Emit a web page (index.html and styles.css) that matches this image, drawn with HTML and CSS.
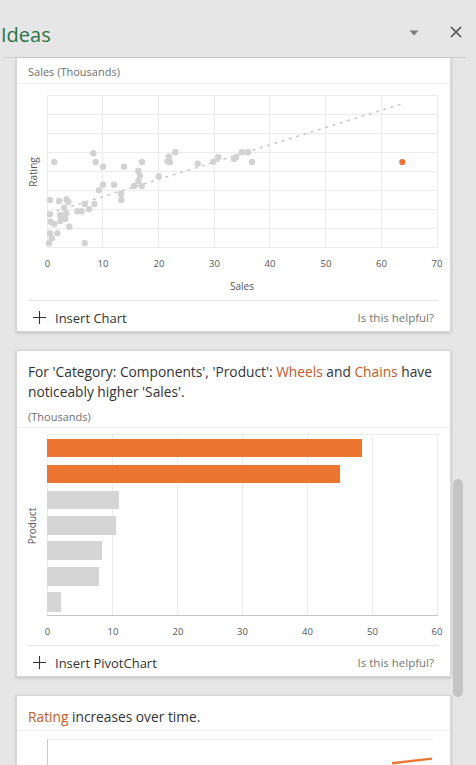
FILE: index.html
```html
<!DOCTYPE html>
<html lang="en">
<head>
<meta charset="utf-8">
<title>Ideas</title>
<link rel="stylesheet" href="styles.css">
</head>
<body>
<div class="pane">
  <header class="pane-header">
    <h1 class="title">Ideas</h1>
    <div class="header-actions">
      <svg class="icon-dropdown" width="10" height="6" viewBox="0 0 10 6"><path d="M0.5 0.5 H9.5 L5 5.5 Z" fill="#7a7a7a"/></svg>
      <svg class="icon-close" width="12" height="12" viewBox="0 0 12 12"><path d="M1 1 L11 11 M11 1 L1 11" stroke="#505050" stroke-width="1.6" fill="none"/></svg>
    </div>
  </header>

  <main class="scroll">
    <section class="card card-first">
      <div class="card-sub card-sub-top">Sales (Thousands)</div>
      <svg class="chart chart-scatter" width="433" height="216" viewBox="17 84 433 216">
        <g class="grid" stroke="#ececec" stroke-width="1" shape-rendering="crispEdges">
          <line x1="47" y1="95.5" x2="437" y2="95.5"/>
          <line x1="47" y1="114.5" x2="437" y2="114.5"/>
          <line x1="47" y1="133.5" x2="437" y2="133.5"/>
          <line x1="47" y1="152.5" x2="437" y2="152.5"/>
          <line x1="47" y1="171.5" x2="437" y2="171.5"/>
          <line x1="47" y1="190.5" x2="437" y2="190.5"/>
          <line x1="47" y1="209.5" x2="437" y2="209.5"/>
          <line x1="47" y1="228.5" x2="437" y2="228.5"/>
          <line x1="47" y1="247.5" x2="437" y2="247.5"/>
          <line x1="47.5" y1="95" x2="47.5" y2="248"/>
          <line x1="102.5" y1="95" x2="102.5" y2="248"/>
          <line x1="158.5" y1="95" x2="158.5" y2="248"/>
          <line x1="214.5" y1="95" x2="214.5" y2="248"/>
          <line x1="269.5" y1="95" x2="269.5" y2="248"/>
          <line x1="325.5" y1="95" x2="325.5" y2="248"/>
          <line x1="381.5" y1="95" x2="381.5" y2="248"/>
          <line x1="437.5" y1="95" x2="437.5" y2="248"/>
        </g>
        <line x1="50" y1="213" x2="400" y2="104.5" stroke="#c8c8c8" stroke-width="1.6" stroke-dasharray="1.6 6" stroke-linecap="round"/>
        <g class="pts" fill="#d2d2d2">
          <circle cx="54.3" cy="162" r="3.2"/>
          <circle cx="93.3" cy="153.3" r="3.2"/>
          <circle cx="95.7" cy="162" r="3.2"/>
          <circle cx="103" cy="166.7" r="3.2"/>
          <circle cx="124" cy="166.7" r="3.2"/>
          <circle cx="142" cy="162" r="3.2"/>
          <circle cx="138.3" cy="171" r="3.2"/>
          <circle cx="140" cy="176" r="3.2"/>
          <circle cx="138.3" cy="181" r="3.2"/>
          <circle cx="141.7" cy="186" r="3.2"/>
          <circle cx="134" cy="186" r="3.2"/>
          <circle cx="158.7" cy="176.3" r="3.2"/>
          <circle cx="168.7" cy="156.7" r="3.2"/>
          <circle cx="175.3" cy="152.3" r="3.2"/>
          <circle cx="170" cy="162" r="3.2"/>
          <circle cx="167.5" cy="161.5" r="3.2"/>
          <circle cx="197.7" cy="163.7" r="3.2"/>
          <circle cx="213.3" cy="161.7" r="3.2"/>
          <circle cx="218.3" cy="157.3" r="3.2"/>
          <circle cx="236" cy="157.3" r="3.2"/>
          <circle cx="234" cy="159" r="3.2"/>
          <circle cx="242" cy="152.3" r="3.2"/>
          <circle cx="248" cy="152.3" r="3.2"/>
          <circle cx="252" cy="162" r="3.2"/>
          <circle cx="103" cy="184.7" r="3.2"/>
          <circle cx="114" cy="184.7" r="3.2"/>
          <circle cx="99" cy="190.3" r="3.2"/>
          <circle cx="121" cy="194" r="3.2"/>
          <circle cx="121.3" cy="200" r="3.2"/>
          <circle cx="94.3" cy="204" r="3.2"/>
          <circle cx="84.7" cy="204" r="3.2"/>
          <circle cx="89" cy="209.3" r="3.2"/>
          <circle cx="81.7" cy="211.3" r="3.2"/>
          <circle cx="77.3" cy="211.3" r="3.2"/>
          <circle cx="50" cy="200" r="3.2"/>
          <circle cx="59" cy="201" r="3.2"/>
          <circle cx="68.3" cy="202" r="3.2"/>
          <circle cx="66.5" cy="199.5" r="3.2"/>
          <circle cx="64.3" cy="207.7" r="3.2"/>
          <circle cx="66.3" cy="213.3" r="3.2"/>
          <circle cx="60.3" cy="215.3" r="3.2"/>
          <circle cx="65.3" cy="219" r="3.2"/>
          <circle cx="60.3" cy="221" r="3.2"/>
          <circle cx="50" cy="214.3" r="3.2"/>
          <circle cx="50.5" cy="221.7" r="3.2"/>
          <circle cx="54.3" cy="224" r="3.2"/>
          <circle cx="69.3" cy="226.7" r="3.2"/>
          <circle cx="50" cy="233.3" r="3.2"/>
          <circle cx="57.3" cy="233.3" r="3.2"/>
          <circle cx="51.7" cy="238.3" r="3.2"/>
          <circle cx="49" cy="243.3" r="3.2"/>
          <circle cx="84.7" cy="243" r="3.2"/>
        </g>
        <circle cx="402.3" cy="162" r="3.1" fill="#e6733a"/>
        <g class="tick" text-anchor="middle">
          <text x="47.5" y="267">0</text>
          <text x="103" y="267">10</text>
          <text x="159" y="267">20</text>
          <text x="214.5" y="267">30</text>
          <text x="270" y="267">40</text>
          <text x="326" y="267">50</text>
          <text x="381.5" y="267">60</text>
          <text x="437" y="267">70</text>
        </g>
        <text class="axis-title" x="242" y="290" text-anchor="middle">Sales</text>
        <text class="axis-title" x="0" y="0" text-anchor="middle" transform="translate(36.5 172) rotate(-90)">Rating</text>
      </svg>
      <div class="card-footer">
        <span class="action"><svg class="icon-plus" width="13" height="13" viewBox="0 0 13 13"><path d="M6.5 0 V13 M0 6.5 H13" stroke="#333" stroke-width="1.1" fill="none"/></svg>Insert Chart</span>
        <span class="helpful">Is this helpful?</span>
      </div>
    </section>

    <section class="card">
      <div class="card-head">
        <p class="insight">For 'Category: Components', 'Product': <span class="hl">Wheels</span> and <span class="hl">Chains</span> have noticeably higher 'Sales'.</p>
        <div class="card-sub">(Thousands)</div>
      </div>
      <svg class="chart chart-bar" width="433" height="217" viewBox="17 429 433 217">
        <g stroke="#ececec" stroke-width="1" shape-rendering="crispEdges">
          <line x1="47" y1="435.5" x2="437" y2="435.5"/>
          <line x1="47.5" y1="435" x2="47.5" y2="616"/>
          <line x1="112.5" y1="435" x2="112.5" y2="616"/>
          <line x1="177.5" y1="435" x2="177.5" y2="616"/>
          <line x1="242.5" y1="435" x2="242.5" y2="616"/>
          <line x1="307.5" y1="435" x2="307.5" y2="616"/>
          <line x1="372.5" y1="435" x2="372.5" y2="616"/>
          <line x1="437.5" y1="435" x2="437.5" y2="616"/>
        </g>
        <line x1="47" y1="616.5" x2="438" y2="616.5" stroke="#c6c6c6" stroke-width="1" shape-rendering="crispEdges"/>
        <g shape-rendering="crispEdges">
          <rect x="47" y="440" width="315" height="18" fill="#ed7532"/>
          <rect x="47" y="466" width="293" height="18" fill="#ed7532"/>
          <rect x="47" y="492" width="72" height="18" fill="#d5d5d5"/>
          <rect x="47" y="517" width="69" height="19" fill="#d5d5d5"/>
          <rect x="47" y="542" width="55" height="19" fill="#d5d5d5"/>
          <rect x="47" y="568" width="52" height="19" fill="#d5d5d5"/>
          <rect x="47" y="593" width="14" height="20" fill="#d5d5d5"/>
        </g>
        <g class="tick" text-anchor="middle">
          <text x="47.5" y="635.5">0</text>
          <text x="113" y="635.5">10</text>
          <text x="178" y="635.5">20</text>
          <text x="242.5" y="635.5">30</text>
          <text x="307.5" y="635.5">40</text>
          <text x="372.5" y="635.5">50</text>
          <text x="437" y="635.5">60</text>
        </g>
        <text class="axis-title" x="0" y="0" text-anchor="middle" transform="translate(36 527) rotate(-90)">Product</text>
      </svg>
      <div class="card-footer">
        <span class="action"><svg class="icon-plus" width="13" height="13" viewBox="0 0 13 13"><path d="M6.5 0 V13 M0 6.5 H13" stroke="#333" stroke-width="1.1" fill="none"/></svg>Insert PivotChart</span>
        <span class="helpful">Is this helpful?</span>
      </div>
    </section>

    <section class="card">
      <div class="card-head card-head-single">
        <p class="insight"><span class="hl">Rating</span> increases over time.</p>
      </div>
      <svg class="chart chart-line" width="433" height="40" viewBox="17 733 433 40">
        <line x1="47" y1="741.5" x2="433" y2="741.5" stroke="#ededed" stroke-width="1" shape-rendering="crispEdges"/>
        <line x1="47.5" y1="741" x2="47.5" y2="775" stroke="#cdcdcd" stroke-width="1" shape-rendering="crispEdges"/>
        <line x1="392" y1="765.2" x2="432" y2="760.6" stroke="#ed7532" stroke-width="2.4"/>
      </svg>
    </section>
  </main>

  <div class="scroll-thumb"></div>
</div>
</body>
</html>
```

FILE: styles.css
```css
html, body {
  margin: 0;
  padding: 0;
}
body {
  background: #e6e6e6;
  font-family: "Open Sans", "Noto Sans", "Liberation Sans", sans-serif;
  color: #333;
  width: 476px;
  height: 765px;
  overflow: hidden;
}
.pane {
  position: relative;
  width: 476px;
  height: 765px;
  overflow: hidden;
}
.pane-header {
  height: 57px;
  margin: 0 10px 0 3px;
  border-bottom: 1px solid #cfcfcf;
  display: flex;
  align-items: flex-start;
  justify-content: space-between;
}
.title {
  margin: 20px 0 0 -2px;
  font-size: 20px;
  font-weight: 400;
  line-height: 30px;
  color: #2b7448;
}
.header-actions {
  display: flex;
  align-items: center;
  gap: 31px;
  margin-top: 26px;
  margin-right: 4px;
}
.icon-dropdown {
  display: block;
  margin-top: 1px;
}
.icon-close {
  display: block;
}
.scroll {
  display: flex;
  flex-direction: column;
  gap: 18px;
  padding-left: 16px;
}
.card {
  box-sizing: border-box;
  width: 435px;
  background: #fff;
  border: 1px solid #d6d6d6;
  box-shadow: 0 1px 3px rgba(0, 0, 0, 0.18);
}
.card-first {
  border-top: none;
}
.card-sub {
  font-size: 11px;
  line-height: 16px;
  color: #707070;
}
.card-sub-top {
  padding: 6px 11px 3px;
  border-bottom: 1px solid #f0f0f0;
}
.card-head {
  padding: 11px 8px 2px 11px;
  border-bottom: 1px solid #f0f0f0;
}
.card-head-single {
  padding-bottom: 3px;
}
.insight {
  margin: 0;
  font-size: 13.75px;
  line-height: 20px;
  color: #333;
}
.card-head .card-sub {
  margin-top: 7px;
}
.hl {
  color: #c25b25;
}
.chart {
  display: block;
}
.tick text {
  font-size: 9.5px;
  fill: #555;
}
.axis-title {
  font-size: 10px;
  fill: #555;
}
.card-footer {
  margin: 0 12px 0 11px;
  border-top: 1px solid #e4e4e4;
  height: 31px;
  display: flex;
  align-items: center;
  justify-content: space-between;
  padding-top: 3px;
  box-sizing: border-box;
}
.action {
  display: flex;
  align-items: center;
  gap: 9px;
  padding-left: 5px;
  font-size: 13px;
  color: #333;
}
.icon-plus {
  display: block;
}
.helpful {
  font-size: 11.5px;
  color: #777;
  padding-right: 4px;
}
.scroll-thumb {
  position: absolute;
  left: 453px;
  top: 479px;
  width: 10px;
  height: 218px;
  border-radius: 5px;
  background: #c4c4c4;
}
```
